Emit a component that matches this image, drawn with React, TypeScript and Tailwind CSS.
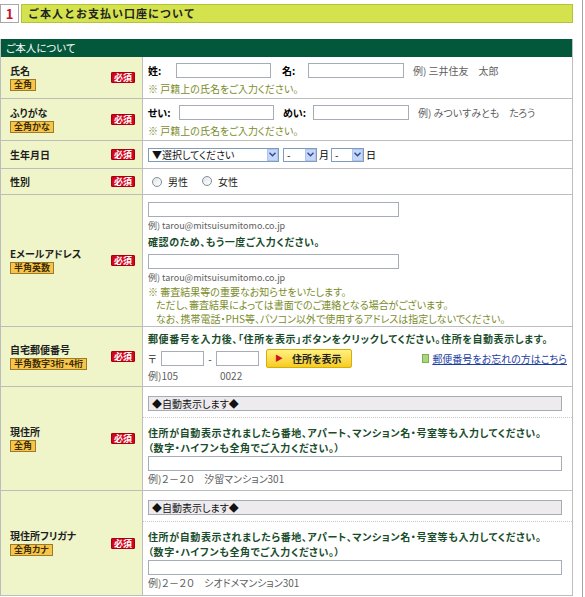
import React from 'react';

const Hissu = () => (
  <span className="inline-flex items-center justify-center w-[24px] h-[11px] bg-[#d1061d] text-white text-[9px] font-bold leading-none rounded-[1px] border border-[#a8000f]">
    必須
  </span>
);

const Tag = ({ children }: { children: React.ReactNode }) => (
  <span className="self-start mt-[2px] px-[3px] h-[12px] leading-[10px] bg-[#f7c54a] border border-[#9b7b2a] text-[9px] font-bold text-[#3b2c05]">
    {children}
  </span>
);

const Row = ({
  h,
  title,
  tag,
  children,
  body,
}: {
  h: string;
  title: string;
  tag?: string;
  children: React.ReactNode;
  body: string;
}) => (
  <div className={`flex border-b border-[#bdbdbd] ${h}`}>
    <div className="w-[142px] shrink-0 bg-[#eff5c8] border-r border-[#bdbdbd] flex items-center justify-between pl-[9px] pr-[7px]">
      <div className="flex flex-col">
        <span className="text-[10px] font-bold leading-[12px] text-[#1e1e1e]">{title}</span>
        {tag && <Tag>{tag}</Tag>}
      </div>
      <Hissu />
    </div>
    <div className={`flex-1 min-w-0 ${body}`}>{children}</div>
  </div>
);

const Field = ({ w }: { w: string }) => (
  <input type="text" className={`h-[15px] border border-[#a6adb6] bg-white outline-none ${w}`} />
);

const Chevron = () => (
  <svg width="7" height="5" viewBox="0 0 7 5">
    <path d="M0.5 0.8 L3.5 3.8 L6.5 0.8" fill="none" stroke="#2c4a8c" strokeWidth="1.4" />
  </svg>
);

const Select = ({ w, label }: { w: string; label: string }) => (
  <div className={`flex items-center h-[14px] border border-[#7f9db9] bg-white ${w}`}>
    <span className="flex-1 pl-[3px] text-[10px] leading-none text-[#111]">{label}</span>
    <span className="w-[11px] h-[12px] bg-[#c5d6fb] border border-[#b0c4ee] flex items-center justify-center">
      <Chevron />
    </span>
  </div>
);

const Radio = () => (
  <span className="inline-block w-[10px] h-[10px] rounded-full border border-[#7c8f9d] bg-gradient-to-br from-[#e4e4e4] to-white" />
);

const Note = ({ children }: { children: React.ReactNode }) => (
  <div className="text-[10px] leading-[13px] text-[#7b8c2a]">{children}</div>
);

const Example = ({ children }: { children: React.ReactNode }) => (
  <div className="text-[10px] leading-[12px] text-[#5e5e5e]">{children}</div>
);

const Strong = ({ children }: { children: React.ReactNode }) => (
  <div className="text-[10px] font-bold leading-[12.5px] tracking-[0.6px] text-[#184c2a]">{children}</div>
);

const MailExample = () => (
  <div className="text-[9px] leading-[12px] text-[#5e5e5e]">例) tarou@mitsuisumitomo.co.jp</div>
);

const AutoBox = () => (
  <div className="pt-[9px] pb-[6px] pl-[5px] pr-[10px] border-b border-dotted border-[#c8c8c8]">
    <div className="h-[15px] border border-[#a9a9b3] bg-[#eeebef] text-[10px] leading-[13px] pl-[3px] text-[#111]">
      ◆自動表示します◆
    </div>
  </div>
);

const Address = ({ example }: { example: string }) => (
  <>
    <AutoBox />
    <div className="pl-[5px] pr-[10px] pt-[8px]">
      <div className="text-[10px] font-bold leading-[14.5px] tracking-[0.6px] text-[#184c2a]">
        <div>住所が自動表示されましたら番地、アパート、マンション名・号室等も入力してください。</div>
        <div>（数字・ハイフンも全角でご入力ください。）</div>
      </div>
      <div className="mt-[1px]">
        <Field w="w-full block h-[15px]" />
      </div>
      <div className="mt-[2px]">
        <Example>{example}</Example>
      </div>
    </div>
  </>
);

export default function App() {
  return (
    <div className="w-[585px] min-h-[597px] bg-white [font-family:'Noto_Sans_CJK_JP','Noto_Sans',sans-serif] [font-feature-settings:'palt']">
      <div className="w-[583px] min-h-[597px] border-r border-[#a3a3a3] pt-[4px]">
        <div className="flex w-[573px] h-[19px] gap-[2px]">
          <div className="w-[19px] border border-[#a8a8a8] bg-white flex items-center justify-center text-[13px] font-bold text-[#c8102e] leading-none">
            1
          </div>
          <div className="flex-1 bg-[#d3e24d] border border-[#b4c43a] flex items-center pl-[6px] text-[11px] font-bold tracking-[1px] text-[#222] [font-feature-settings:normal]">
            ご本人とお支払い口座について
          </div>
        </div>

        <div className="mt-[16px] w-[573px] border-l border-r border-[#bdbdbd]">
          <div className="h-[18px] bg-[#03573a] text-white text-[10.5px] leading-[18px] pl-[5px]">
            ご本人について
          </div>

          <Row h="h-[42px]" title="氏名" tag="全角" body="pl-[5px] pt-[6px]">
            <div className="flex items-center h-[15px] text-[10px]">
              <span className="w-[28px] font-bold">姓:</span>
              <Field w="w-[95px]" />
              <span className="ml-[11px] w-[26px] font-bold">名:</span>
              <Field w="w-[96px]" />
              <span className="ml-[9px] text-[#5e5e5e]">例) 三井住友　太郎</span>
            </div>
            <div className="mt-[4px]">
              <Note>※ 戸籍上の氏名をご入力ください。</Note>
            </div>
          </Row>

          <Row h="h-[42px]" title="ふりがな" tag="全角かな" body="pl-[5px] pt-[6px]">
            <div className="flex items-center h-[15px] text-[10px]">
              <span className="w-[31px] font-bold">せい:</span>
              <Field w="w-[95px]" />
              <span className="ml-[9px] w-[30px] font-bold">めい:</span>
              <Field w="w-[96px]" />
              <span className="ml-[9px] text-[#5e5e5e]">例) みついすみとも　たろう</span>
            </div>
            <div className="mt-[4px]">
              <Note>※ 戸籍上の氏名をご入力ください。</Note>
            </div>
          </Row>

          <Row h="h-[28px]" title="生年月日" body="pl-[5px] flex items-center">
            <Select w="w-[131px]" label="▼選択してください" />
            <Select w="w-[34px] ml-[4px]" label="-" />
            <span className="text-[10px] px-[2px]">月</span>
            <Select w="w-[33px]" label="-" />
            <span className="text-[10px] pl-[2px]">日</span>
          </Row>

          <Row h="h-[26px]" title="性別" body="pl-[9px] flex items-center text-[10px] text-[#222]">
            <Radio />
            <span className="ml-[6px]">男性</span>
            <span className="ml-[14px]">
              <Radio />
            </span>
            <span className="ml-[6px]">女性</span>
          </Row>

          <Row h="h-[132px]" title="Eメールアドレス" tag="半角英数" body="pl-[5px] pt-[7px]">
            <Field w="w-[251px] block h-[14px]" />
            <div className="mt-[3px]">
              <MailExample />
            </div>
            <div className="mt-[4px]">
              <Strong>確認のため、もう一度ご入力ください。</Strong>
            </div>
            <div className="mt-[5px]">
              <Field w="w-[251px] block h-[14px]" />
            </div>
            <div className="mt-[3px]">
              <MailExample />
            </div>
            <div className="mt-[1px] text-[10px] leading-[13.5px] text-[#7b8c2a]">
              <div>※ 審査結果等の重要なお知らせをいたします。</div>
              <div className="pl-[8px]">ただし、審査結果によっては書面でのご連絡となる場合がございます。</div>
              <div className="pl-[8px]">なお、携帯電話・PHS等、パソコン以外で使用するアドレスは指定しないでください。</div>
            </div>
          </Row>

          <Row h="h-[60px]" title="自宅郵便番号" tag="半角数字3桁・4桁" body="pl-[5px] pt-[6px]">
            <Strong>郵便番号を入力後、「住所を表示」ボタンをクリックしてください。住所を自動表示します。</Strong>
            <div className="mt-[3px] flex items-center h-[19px] text-[10px]">
              <span className="w-[13px] text-[#333]">〒</span>
              <Field w="w-[43px] h-[14px]" />
              <span className="w-[12px] text-center text-[#333]">-</span>
              <Field w="w-[43px] h-[14px]" />
              <button className="ml-[7px] w-[86px] h-[19px] flex items-center pl-[8px] gap-[9px] rounded-[2px] border border-[#d8ac10] bg-gradient-to-b from-[#fff27a] to-[#f6cc14] text-[10px] font-bold text-[#222]">
                <span className="text-[#d0101a] text-[8px]">▶</span>
                住所を表示
              </button>
              <span className="ml-auto mr-[5px] flex items-center gap-[3px]">
                <span className="w-[7px] h-[9px] bg-[#a9d67e] border border-[#7fae4e]" />
                <span className="text-[#1c3da3] underline">郵便番号をお忘れの方はこちら</span>
              </span>
            </div>
            <div className="mt-[2px] flex">
              <Example>
                <span className="inline-block w-[72px]">例)105</span>0022
              </Example>
            </div>
          </Row>

          <Row h="h-[104px]" title="現住所" tag="全角" body="flex flex-col">
            <Address example="例)２－２０　汐留マンション301" />
          </Row>

          <Row h="h-[105px]" title="現住所フリガナ" tag="全角カナ" body="flex flex-col">
            <Address example="例)２－２０　シオドメマンション301" />
          </Row>
        </div>
      </div>
    </div>
  );
}
